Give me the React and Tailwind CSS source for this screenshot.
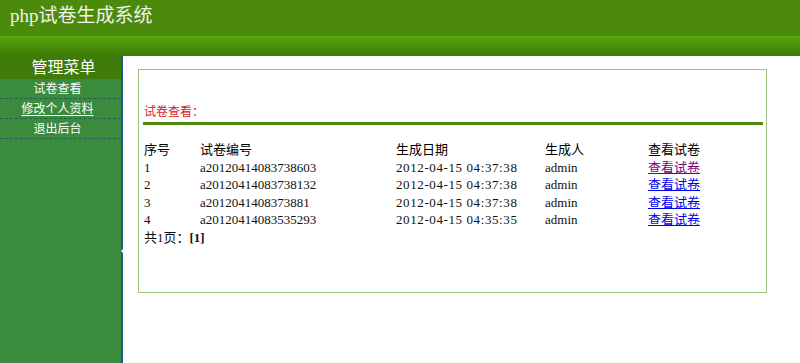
import React from 'react';

const rows = [
  { id: '1', code: 'a20120414083738603', date: '2012-04-15 04:37:38', user: 'admin', visited: true },
  { id: '2', code: 'a20120414083738132', date: '2012-04-15 04:37:38', user: 'admin' },
  { id: '3', code: 'a2012041408373881', date: '2012-04-15 04:37:38', user: 'admin' },
  { id: '4', code: 'a20120414083535293', date: '2012-04-15 04:35:35', user: 'admin' },
];

const menu = [
  { label: '试卷查看' },
  { label: '修改个人资料', hover: true },
  { label: '退出后台' },
];

const font = 'font-["Liberation_Serif","Noto_Sans_CJK_SC",serif]';

export default function App() {
  return (
    <div className={`h-[363px] w-[800px] flex flex-col overflow-hidden bg-white ${font}`}>
      {/* 顶部标题 */}
      <header className="h-[36px] bg-[#4b8a0b] flex items-center pl-[10px]">
        <span className="text-[19px] leading-none text-[#f2f2ee] pb-[6px]">php试卷生成系统</span>
      </header>
      <div className="h-[20px] bg-gradient-to-b from-[#57a40b] to-[#3c7a05] border-t border-[#63ad1c]" />

      <div className="flex flex-1">
        {/* 左侧菜单 */}
        <aside className="relative w-[123px] bg-[#3a8b3c] border-r-2 border-[#1b5d86] flex flex-col">
          <div className="h-[23px] bg-[#3f7b08] text-center pl-[6px] text-[16px] leading-[23px] text-white">管理菜单</div>
          {menu.map((m) => (
            <div
              key={m.label}
              className="h-[20px] pt-[2px] pr-[6px] text-center text-[12px] leading-[17px] text-white border-b border-dashed border-[#245f5a]"
            >
              <span className={m.hover ? 'underline underline-offset-2' : ''}>{m.label}</span>
            </div>
          ))}
          <span className="absolute right-[-3px] top-[192px] w-0 h-0 border-y-[3px] border-y-transparent border-r-[3px] border-r-white" />
        </aside>

        {/* 主内容 */}
        <main className="flex-1 pl-[15px] pt-[13px]">
          <div className="w-[629px] h-[224px] border border-[#9cc47e] pt-[34px] pl-[4px] pr-[3px]">
            <div className="h-[16px] text-[12px] leading-[16px] text-[#d42020] pl-[1px]">试卷查看：</div>
            <div className="mt-[2px] h-[3px] bg-[#4b8a0b]" />

            <div className="mt-[16px] pl-[1px] text-[13px] text-[#111]">
              <div className="grid grid-cols-[56px_196px_149px_103px_1fr] h-[17.5px] leading-[17.5px] text-black">
                <span>序号</span>
                <span>试卷编号</span>
                <span>生成日期</span>
                <span>生成人</span>
                <span>查看试卷</span>
              </div>
              {rows.map((r) => (
                <div key={r.id} className="grid grid-cols-[56px_196px_149px_103px_1fr] h-[17.5px] leading-[17.5px]">
                  <span>{r.id}</span>
                  <span>{r.code}</span>
                  <span className="tracking-[0.6px]">{r.date}</span>
                  <span>{r.user}</span>
                  <span>
                    <a href="#" className={`underline ${r.visited ? 'text-[#800080]' : 'text-[#0000ee]'}`}>查看试卷</a>
                  </span>
                </div>
              ))}
              <div className="h-[17.5px] leading-[17.5px]">
                共1页：<b>[1]</b>
              </div>
            </div>
          </div>
        </main>
      </div>
    </div>
  );
}
